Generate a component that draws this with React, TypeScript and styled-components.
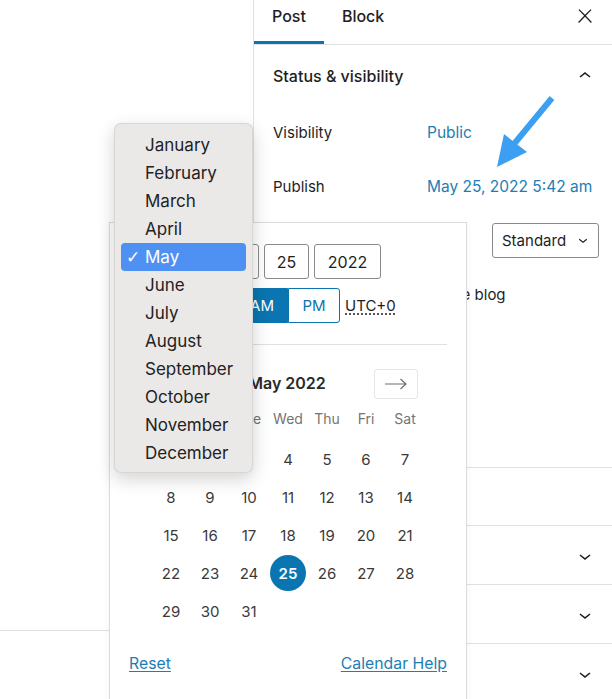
import React from "react";
import styled, { createGlobalStyle } from "styled-components";

const BLUE = "#0a75b0";
const LINK = "#1e7db4";
const LINE = "#e0e0e0";

const GlobalStyle = createGlobalStyle`
  html, body {
    margin: 0;
    padding: 0;
    background: #fff;
  }
  body {
    font-family: Inter, "Noto Sans", "Liberation Sans", sans-serif;
    color: #1e1e1e;
    -webkit-font-smoothing: antialiased;
  }
  * {
    box-sizing: border-box;
  }
`;

const MONTHS = [
  "January",
  "February",
  "March",
  "April",
  "May",
  "June",
  "July",
  "August",
  "September",
  "October",
  "November",
  "December",
];

const WEEKDAYS = ["Sun", "Mon", "Tue", "Wed", "Thu", "Fri", "Sat"];

// May 2022 starts on a Sunday
const DAYS = Array.from({ length: 31 }, (_, i) => i + 1);

const CloseIcon = () => (
  <svg width="22" height="22" viewBox="0 0 24 24" fill="currentColor">
    <path d="M13 11.8l6.1-6.3-1-1-6.1 6.2-6.1-6.2-1 1 6.1 6.3-6.5 6.7 1 1 6.5-6.6 6.5 6.6 1-1z" />
  </svg>
);

const ChevronUp = () => (
  <svg width="24" height="24" viewBox="0 0 24 24" fill="currentColor">
    <path d="M6.5 12.4L12 8l5.5 4.4-.9 1.2L12 10l-4.5 3.6-1-1.2z" />
  </svg>
);

const ChevronDown = ({ size = 24 }: { size?: number }) => (
  <svg width={size} height={size} viewBox="0 0 24 24" fill="currentColor">
    <path d="M17.5 11.6L12 16l-5.5-4.4.9-1.2L12 14l4.5-3.6 1 1.2z" />
  </svg>
);

const ArrowRight = () => (
  <svg width="24" height="12" viewBox="0 0 24 12" fill="none" stroke="#6f6f6f" strokeWidth="1.2">
    <path d="M1 6h21M16.5 1l5.5 5-5.5 5" />
  </svg>
);

const ArrowLeft = () => (
  <svg width="24" height="12" viewBox="0 0 24 12" fill="none" stroke="#6f6f6f" strokeWidth="1.2">
    <path d="M23 6H2M7.5 1L2 6l5.5 5" />
  </svg>
);

const App: React.FC = () => {
  return (
    <>
      <GlobalStyle />
      <Screen>
        <Canvas>
          <EditorBlock />
        </Canvas>

        <Sidebar>
          <TabBar>
            <Tab $active>Post</Tab>
            <Tab>Block</Tab>
            <IconButton>
              <CloseIcon />
            </IconButton>
          </TabBar>

          <Panel>
            <PanelHeader>
              <PanelTitle>Status &amp; visibility</PanelTitle>
              <ChevronUp />
            </PanelHeader>
            <Row>
              <RowLabel>Visibility</RowLabel>
              <LinkValue>Public</LinkValue>
            </Row>
            <Row>
              <RowLabel>Publish</RowLabel>
              <LinkValue>May 25, 2022 5:42 am</LinkValue>
            </Row>
            <Row>
              <SelectBox>
                Standard
                <ChevronDown size={18} />
              </SelectBox>
            </Row>
            <Row>
              <Checkbox />
              <span>Stick to the top of the blog</span>
            </Row>
            <Row />
            <Row />
          </Panel>

          <Panel $height={57} />
          {[0, 1, 2].map((i) => (
            <Panel key={i} $height={58}>
              <PanelHeader $height={58}>
                <span />
                <ChevronDown />
              </PanelHeader>
            </Panel>
          ))}
        </Sidebar>

        <Popover>
          <FieldRow>
            <Field $width={130} />
            <Field $width={45}>25</Field>
            <Field $width={67}>2022</Field>
          </FieldRow>
          <TimeRow>
            <Field $width={40} />
            <Colon />
            <Field $width={40} />
            <AmPm>
              <AmPmButton $active>AM</AmPmButton>
              <AmPmButton>PM</AmPmButton>
            </AmPm>
            <Timezone>UTC+0</Timezone>
          </TimeRow>
          <Divider />

          <Calendar>
            <CalHeader>
              <NavButton>
                <ArrowLeft />
              </NavButton>
              <CalTitle>May 2022</CalTitle>
              <NavButton>
                <ArrowRight />
              </NavButton>
            </CalHeader>
            <WeekdayGrid>
              {WEEKDAYS.map((d) => (
                <Weekday key={d}>{d}</Weekday>
              ))}
            </WeekdayGrid>
            <DayGrid>
              {DAYS.map((d) => (
                <DayCell key={d}>
                  <Day $selected={d === 25}>{d}</Day>
                </DayCell>
              ))}
            </DayGrid>
          </Calendar>

          <PopoverFooter>
            <FooterLink>Reset</FooterLink>
            <FooterLink>Calendar Help</FooterLink>
          </PopoverFooter>
        </Popover>

        <MonthMenu>
          {MONTHS.map((m) => (
            <MenuItem key={m} $selected={m === "May"}>
              <Check>{m === "May" ? "✓" : ""}</Check>
              {m}
            </MenuItem>
          ))}
        </MonthMenu>

        <Annotation width="612" height="699" viewBox="0 0 612 699">
          <line x1="552" y1="98" x2="514" y2="144" stroke="#3d9ff1" strokeWidth="6" />
          <polygon points="504,134 527,152 497,167" fill="#3d9ff1" />
        </Annotation>
      </Screen>
    </>
  );
};

export default App;

const Screen = styled.div`
  position: relative;
  width: 612px;
  height: 699px;
  overflow: hidden;
  display: flex;
  background: #fff;
`;

const Canvas = styled.div`
  width: 253px;
  flex: none;
`;

const EditorBlock = styled.div`
  height: 631px;
  border-bottom: 1px solid ${LINE};
`;

const Sidebar = styled.aside`
  flex: 1;
  display: flex;
  flex-direction: column;
  border-left: 1px solid ${LINE};
  font-size: 15px;
`;

const TabBar = styled.div`
  display: flex;
  height: 45px;
  flex: none;
  border-bottom: 1px solid ${LINE};
`;

const Tab = styled.div<{ $active?: boolean }>`
  height: 44px;
  padding: 6px 18px 0;
  font-size: 16px;
  font-weight: 500;
  line-height: 20px;
  box-shadow: ${(p) => (p.$active ? `inset 0 -3px 0 ${BLUE}` : "none")};
`;

const IconButton = styled.div`
  margin-left: auto;
  padding: 5px 16px 0 0;
  color: #1e1e1e;
`;

const Panel = styled.section<{ $height?: number }>`
  flex: none;
  height: ${(p) => (p.$height ? `${p.$height + 1}px` : "auto")};
  padding-bottom: ${(p) => (p.$height ? "0" : "38px")};
  border-bottom: 1px solid ${LINE};
`;

const PanelHeader = styled.div<{ $height?: number }>`
  height: ${(p) => p.$height ?? 60}px;
  display: flex;
  align-items: center;
  justify-content: space-between;
  padding: 2px 15px 0 19px;
  color: #1e1e1e;
`;

const PanelTitle = styled.span`
  font-size: 16px;
  font-weight: 500;
`;

const Row = styled.div`
  height: 54px;
  display: flex;
  align-items: center;
  padding: 0 13px 0 19px;
  color: #1e1e1e;
`;

const RowLabel = styled.span`
  width: 154px;
  flex: none;
`;

const LinkValue = styled.span`
  color: ${LINK};
  font-size: 15.5px;
`;

const SelectBox = styled.div`
  margin-left: auto;
  width: 107px;
  height: 35px;
  border: 1px solid #8a8a8a;
  border-radius: 3px;
  display: flex;
  align-items: center;
  justify-content: space-between;
  padding: 0 6px 0 9px;
  font-size: 15px;
`;

const Checkbox = styled.span`
  width: 18px;
  height: 18px;
  border: 1px solid #757575;
  border-radius: 2px;
  margin-right: 27px;
  flex: none;
`;

const Popover = styled.div`
  position: absolute;
  left: 109px;
  top: 222px;
  width: 358px;
  height: 520px;
  background: #fff;
  border: 1px solid #dcdcdc;
  box-shadow: 0 2px 8px rgba(0, 0, 0, 0.05);
  padding: 21px 19px 0 19px;
`;

const FieldRow = styled.div`
  display: flex;
  gap: 5px;
  height: 35px;
`;

const Field = styled.div<{ $width: number }>`
  width: ${(p) => p.$width}px;
  height: 35px;
  border: 1px solid #8a8a8a;
  border-radius: 3px;
  display: flex;
  align-items: center;
  justify-content: center;
  font-size: 16px;
  color: #1e1e1e;
`;

const TimeRow = styled.div`
  display: flex;
  align-items: center;
  height: 35px;
  margin-top: 9px;
`;

const Colon = styled.span`
  width: 12px;
`;

const AmPm = styled.div`
  display: flex;
  margin-left: 15px;
`;

const AmPmButton = styled.div<{ $active?: boolean }>`
  width: 52px;
  height: 35px;
  display: flex;
  align-items: center;
  justify-content: center;
  font-size: 15px;
  border: 1px solid ${BLUE};
  background: ${(p) => (p.$active ? BLUE : "#fff")};
  color: ${(p) => (p.$active ? "#fff" : BLUE)};
  border-radius: ${(p) => (p.$active ? "3px 0 0 3px" : "0 3px 3px 0")};
`;

const Timezone = styled.span`
  margin-left: 5px;
  font-size: 15px;
  text-decoration: underline dotted;
  text-underline-offset: 3px;
`;

const Divider = styled.div`
  height: 1px;
  margin-top: 21px;
  background: ${LINE};
`;

const Calendar = styled.div`
  width: 273px;
  margin: 24px auto 0;
`;

const CalHeader = styled.div`
  display: flex;
  align-items: center;
  justify-content: space-between;
  height: 30px;
  padding: 0 7px 0 5px;
`;

const NavButton = styled.div`
  width: 44px;
  height: 30px;
  border: 1px solid #e6e6e6;
  border-radius: 3px;
  display: flex;
  align-items: center;
  justify-content: center;
`;

const CalTitle = styled.span`
  font-size: 16px;
  font-weight: 600;
  color: #2a2a2a;
  margin-top: -2px;
`;

const WeekdayGrid = styled.div`
  display: grid;
  grid-template-columns: repeat(7, 39px);
  height: 41px;
  align-items: center;
  padding-bottom: 3px;
`;

const Weekday = styled.span`
  text-align: center;
  font-size: 14px;
  color: #757575;
`;

const DayGrid = styled.div`
  display: grid;
  grid-template-columns: repeat(7, 39px);
  grid-auto-rows: 38px;
`;

const DayCell = styled.div`
  display: flex;
  align-items: center;
  justify-content: center;
`;

const Day = styled.span<{ $selected?: boolean }>`
  width: 36px;
  height: 36px;
  border-radius: 50%;
  display: flex;
  align-items: center;
  justify-content: center;
  font-size: 15px;
  background: ${(p) => (p.$selected ? BLUE : "transparent")};
  color: ${(p) => (p.$selected ? "#fff" : "#3a3a3a")};
  font-weight: ${(p) => (p.$selected ? 600 : 400)};
`;

const PopoverFooter = styled.div`
  display: flex;
  justify-content: space-between;
  align-items: center;
  height: 22px;
  margin-top: 22px;
`;

const FooterLink = styled.span`
  color: ${LINK};
  font-size: 15.8px;
  text-decoration: underline;
  text-underline-offset: 2px;
`;

const MonthMenu = styled.ul`
  position: absolute;
  left: 114px;
  top: 123px;
  width: 139px;
  margin: 0;
  padding: 7px 6px 5px;
  list-style: none;
  background: #ebe8e8;
  border: 1px solid rgba(0, 0, 0, 0.08);
  border-radius: 7px;
  box-shadow: 0 6px 18px rgba(0, 0, 0, 0.18);
`;

const MenuItem = styled.li<{ $selected?: boolean }>`
  height: 28px;
  display: flex;
  align-items: center;
  font-size: 17px;
  color: ${(p) => (p.$selected ? "#fff" : "#222")};
  background: ${(p) => (p.$selected ? "#4f91f2" : "transparent")};
  border-radius: 4px;
`;

const Check = styled.span`
  width: 24px;
  flex: none;
  text-align: center;
  font-size: 17px;
  font-family: "DejaVu Sans", sans-serif;
`;

const Annotation = styled.svg`
  position: absolute;
  left: 0;
  top: 0;
  pointer-events: none;
`;
